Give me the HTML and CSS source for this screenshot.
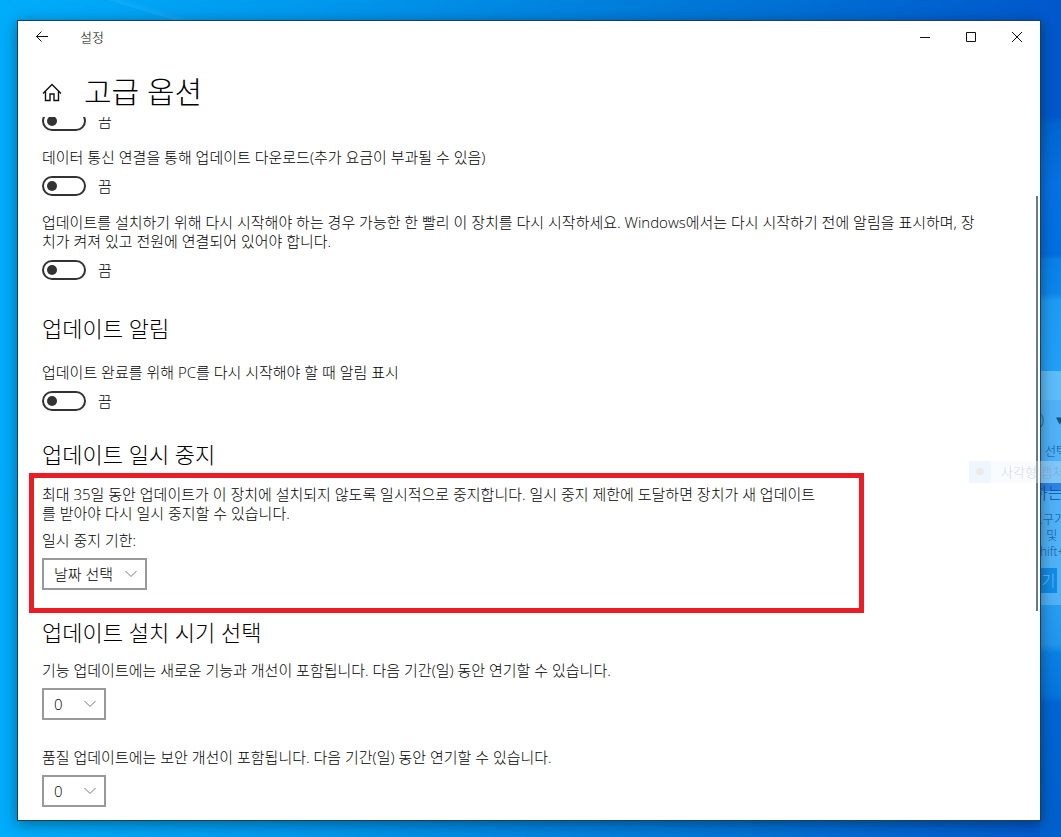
FILE: index.html
```html
<!DOCTYPE html>
<html lang="ko">
<head>
  <meta charset="UTF-8">
  <meta name="viewport" content="width=device-width, initial-scale=1.0">
  <title>설정</title>
  <link rel="stylesheet" href="styles.css">
</head>
<body>

  <!-- Capture tool behind the settings window -->
  <div class="capture">
    <div class="capture-title"></div>
    <div class="capture-tools"><span>)</span><span>▾</span></div>
    <p class="capture-select">선택</p>
    <p class="capture-heading">하는</p>
    <p class="capture-text">.구기<br>&nbsp; 및<br>hift+</p>
    <button class="capture-button" type="button">기</button>
  </div>

  <main class="window">
    <header class="titlebar">
      <button class="back" type="button" aria-label="뒤로">
        <svg width="14" height="14" viewBox="0 0 14 14"><path d="M13 6.500H1.500M6.500 1.500L1.500 6.500l5 5"/></svg>
      </button>
      <span class="app-name">설정</span>
      <button class="caption" type="button" aria-label="최소화">
        <svg width="10" height="10" viewBox="0 0 10 10"><path d="M0 5.500h10"/></svg>
      </button>
      <button class="caption" type="button" aria-label="최대화">
        <svg width="10" height="10" viewBox="0 0 10 10"><path d="M.5.5h9v9h-9z"/></svg>
      </button>
      <button class="caption" type="button" aria-label="닫기">
        <svg width="10" height="10" viewBox="0 0 10 10"><path d="M0 0l10 10M10 0L0 10"/></svg>
      </button>
    </header>

    <div class="page-title">
      <button class="home" type="button" aria-label="홈">
        <svg width="20" height="20" viewBox="0 0 20 20"><path d="M1 11.500L10 2.500l9 9M3.500 9.500v9H8v-6.500h4v6.500h4.500v-9"/></svg>
      </button>
      <h1>고급 옵션</h1>
    </div>

    <div class="scroll-area">
      <div class="content">
        <label class="toggle first">
          <input type="checkbox" role="switch" aria-label="다른 제품 업데이트 받기">
          <span>끔</span>
        </label>

        <p class="setting" id="metered">데이터 통신 연결을 통해 업데이트 다운로드(추가 요금이 부과될 수 있음)</p>
        <label class="toggle">
          <input type="checkbox" role="switch" aria-labelledby="metered">
          <span>끔</span>
        </label>

        <p class="setting" id="restart">업데이트를 설치하기 위해 다시 시작해야 하는 경우 가능한 한 빨리 이 장치를 다시 시작하세요. Windows에서는 다시 시작하기 전에 알림을 표시하며, 장치가 켜져 있고 전원에 연결되어 있어야 합니다.</p>
        <label class="toggle">
          <input type="checkbox" role="switch" aria-labelledby="restart">
          <span>끔</span>
        </label>

        <h2 class="notify-heading">업데이트 알림</h2>
        <p class="setting" id="notify">업데이트 완료를 위해 PC를 다시 시작해야 할 때 알림 표시</p>
        <label class="toggle">
          <input type="checkbox" role="switch" aria-labelledby="notify">
          <span>끔</span>
        </label>

        <h2 class="pause-heading">업데이트 일시 중지</h2>
        <section class="highlight">
          <p>최대 35일 동안 업데이트가 이 장치에 설치되지 않도록 일시적으로 중지합니다. 일시 중지 제한에 도달하면 장치가 새 업데이트를 받아야 다시 일시 중지할 수 있습니다.</p>
          <label class="select-label" for="pause">일시 중지 기한:</label>
          <div class="select date">
            <select id="pause"><option>날짜 선택</option></select>
            <svg width="12" height="8" viewBox="0 0 12 8"><path d="M.5 1L6 6.500 11.500 1"/></svg>
          </div>
        </section>

        <h2 class="defer-heading">업데이트 설치 시기 선택</h2>
        <label class="select-label" for="feature">기능 업데이트에는 새로운 기능과 개선이 포함됩니다. 다음 기간(일) 동안 연기할 수 있습니다.</label>
        <div class="select days">
          <select id="feature"><option>0</option></select>
          <svg width="12" height="8" viewBox="0 0 12 8"><path d="M.5 1L6 6.500 11.500 1"/></svg>
        </div>

        <label class="select-label quality" for="quality">품질 업데이트에는 보안 개선이 포함됩니다. 다음 기간(일) 동안 연기할 수 있습니다.</label>
        <div class="select days">
          <select id="quality"><option>0</option></select>
          <svg width="12" height="8" viewBox="0 0 12 8"><path d="M.5 1L6 6.500 11.500 1"/></svg>
        </div>
      </div>
      <div class="scrollbar"><div class="thumb"></div></div>
    </div>
  </main>

  <!-- Tooltip fading out over the window edge -->
  <div class="tooltip"><span class="tooltip-icon">●</span><span>사각형 캡처</span></div>

</body>
</html>
```

FILE: styles.css
```css
* {
  box-sizing: border-box;
}

body {
  position: relative;
  display: flex;
  height: 100vh;
  margin: 0;
  padding: 20px 20px 16px 17px;
  overflow: hidden;
  font-family: "Open Sans", "Noto Sans CJK KR", sans-serif;
  font-size: 15px;
  font-weight: 300;
  line-height: 19px;
  color: #000;
  background:
    linear-gradient(176deg, transparent 14%, #0066d2 15%, #0672e2 22%, #0070e0 30%, transparent 31%) right / 21px 100% no-repeat,
    linear-gradient(to bottom, transparent 20%, #0064d6 30%, #0a80ea 31%, #0d86ec 35%, #1d9cf5 36%, #2ea8fa 65%, #2196ee 77%, #0a80e4 78%, #0675de 83%, #0066d4 84%, #0060cc) right / 21px 100% no-repeat,
    linear-gradient(17deg, transparent 50%, rgba(60, 180, 255, 0.3) 51%, transparent 60%) 60px 0 / 160px 20px no-repeat,
    linear-gradient(to right, #00adfb, #0098ee 30%, #0078d8 65%, #0058cc);
}

button, select {
  font: inherit;
  color: inherit;
}

button {
  padding: 0;
  border: none;
  background: none;
}

svg {
  fill: none;
  stroke: #111;
}

h1, h2, p {
  margin: 0;
  font-weight: 300;
}

.window {
  position: relative;
  display: flex;
  flex: 1;
  flex-direction: column;
  min-width: 0;
  border: 1px solid #1b405c;
  background: #fff;
  box-shadow: 0 3px 14px rgba(0, 0, 0, 0.4);
}

.titlebar {
  display: flex;
  align-items: center;
  height: 32px;
}

.back {
  display: flex;
  justify-content: center;
  width: 48px;
}

.app-name {
  flex: 1;
  padding-left: 14px;
  font-size: 13px;
}

.caption {
  display: flex;
  align-items: center;
  justify-content: center;
  width: 46px;
  height: 32px;
}

.page-title {
  display: flex;
  align-items: center;
  gap: 22px;
  height: 64px;
  padding: 14px 24px 0;
}

.home {
  display: flex;
}

.home svg {
  stroke-width: 1.4;
}

h1 {
  font-size: 30px;
  line-height: 40px;
}

.scroll-area {
  display: flex;
  flex: 1;
  min-height: 0;
  overflow: hidden;
}

.content {
  flex: 1;
  min-width: 0;
  padding: 0 12px 0 24px;
}

.toggle {
  display: flex;
  align-items: center;
  gap: 12px;
  height: 20px;
}

.toggle.first {
  margin-top: -6px;
}

.toggle input {
  display: flex;
  align-items: center;
  width: 44px;
  height: 20px;
  margin: 0;
  padding: 0 3px;
  border: 2px solid #333;
  border-radius: 10px;
  appearance: none;
}

.toggle input::before {
  width: 10px;
  height: 10px;
  border-radius: 50%;
  background: #333;
  content: "";
}

.toggle input:checked {
  justify-content: flex-end;
}

.setting {
  padding: 17px 40px 9px 0;
}

h2 {
  font-size: 22px;
  line-height: 28px;
}

.notify-heading {
  margin: 34px 0 4px;
}

.pause-heading {
  margin-top: 29px;
}

.highlight {
  width: 85%;
  margin: 5px 0 5px -13px;
  padding: 7px 36px 18px 8px;
  border: 5px solid #ed1c24;
}

.select-label {
  display: block;
  padding: 8px 0;
}

.select {
  display: grid;
  align-items: center;
  height: 32px;
}

.select.date {
  width: 105px;
}

.select.days {
  width: 64px;
}

.select select {
  grid-area: 1 / 1;
  width: 100%;
  height: 32px;
  padding: 0 10px;
  border: 2px solid #999;
  border-radius: 0;
  background: #fff;
  appearance: none;
}

.select svg {
  grid-area: 1 / 1;
  justify-self: end;
  margin-right: 10px;
  stroke: #777;
  pointer-events: none;
}

.defer-heading {
  margin-bottom: 7px;
}

.quality {
  padding-top: 28px;
}

.scrollbar {
  width: 4px;
  padding-right: 2px;
}

.thumb {
  height: 59%;
  margin-top: 79px;
  background: #777;
}

.capture {
  position: absolute;
  top: 371px;
  right: 0;
  width: 21px;
  height: 234px;
  overflow: hidden;
  color: #0b558f;
  background: #50b2f8;
  white-space: nowrap;
}

.capture-title {
  height: 29px;
  background: #5dbcfa;
}

.capture-tools {
  display: flex;
  gap: 12px;
  height: 38px;
  align-items: center;
}

.capture-select {
  padding-left: 5px;
  font-size: 12px;
  line-height: 28px;
}

.capture-heading {
  margin: 17px 0 9px -7px;
  font-size: 16px;
  line-height: 20px;
  color: #0a4fa8;
  background: linear-gradient(#2f84e2 8px, transparent 8px);
}

.capture-text {
  font-size: 12px;
  line-height: 16px;
}

.capture-button {
  width: 17px;
  height: 25px;
  margin-top: 8px;
  color: #70bef5;
  background: #108ce6;
}

.tooltip {
  position: absolute;
  top: 461px;
  right: 0;
  display: flex;
  width: 92px;
  height: 22px;
  overflow: hidden;
  font-size: 13px;
  line-height: 22px;
  color: rgba(120, 110, 110, 0.3);
  background: rgba(235, 246, 255, 0.3);
  white-space: nowrap;
}

.tooltip-icon {
  flex-shrink: 0;
  width: 22px;
  margin-right: 10px;
  font-size: 8px;
  color: #eee8e6;
  text-align: center;
  background: #eef6ff;
}
```
